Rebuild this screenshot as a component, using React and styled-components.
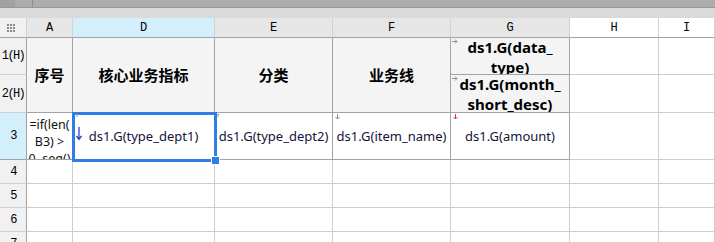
import React from "react";
import styled, { createGlobalStyle } from "styled-components";

const Global = createGlobalStyle`
  html, body {
    margin: 0;
    padding: 0;
    background: #fff;
    overflow: hidden;
  }
  body {
    font-family: "Noto Sans", "Noto Sans CJK SC", sans-serif;
  }
`;

const Page = styled.div`
  width: 715px;
  height: 242px;
  overflow: hidden;
  display: flex;
  flex-direction: column;
  > * {
    flex-shrink: 0;
  }
`;

const TopBar = styled.div`
  display: flex;
  height: 7px;
  border-bottom: 1px solid #969696;
  background: #acacac;
`;

const BarSeg = styled.div`
  width: ${(p) => p.$w}px;
  background: ${(p) => p.$bg};
  border-right: ${(p) => (p.$line ? "1px solid #8c8c8c" : "none")};
`;

const SubBar = styled.div`
  height: 10px;
  background: #dadada;
`;

const Sheet = styled.div`
  display: grid;
  grid-template-columns: 27px 46px 142px 118px 118px 119px 89px 1fr;
  grid-template-rows: 20px 37px 38px 47px 24px 24px 24px 24px;
`;

const ColHead = styled.div`
  background: ${(p) => p.$bg || "#e6e6e6"};
  border-right: 1px solid #d2d2d2;
  border-bottom: 1px solid #a3a3a3;
  display: flex;
  align-items: center;
  justify-content: center;
  font-family: "Liberation Mono", monospace;
  font-size: 12px;
  color: #000;
`;

const Corner = styled(ColHead)`
  background: #f1f1f3;
  justify-content: flex-start;
  padding-left: 7px;
`;

const Dots = styled.div`
  display: grid;
  grid-template-columns: repeat(3, 2px);
  gap: 1px;
  > span {
    width: 2px;
    height: 2px;
    background: #8a8a8a;
  }
`;

const RowHead = styled.div`
  grid-row: ${(p) => p.$row};
  grid-column: 1;
  background: ${(p) => p.$bg || "#f1f1f1"};
  border-right: 1px solid #a3a3a3;
  border-bottom: 1px solid ${(p) => p.$line || "#d0d0d0"};
  display: flex;
  align-items: center;
  justify-content: center;
  font-family: "Liberation Mono", monospace;
  font-size: 12px;
  letter-spacing: -1.6px;
  color: #000;
  white-space: nowrap;
`;

const Cell = styled.div`
  position: relative;
  grid-row: ${(p) => p.$row};
  grid-column: ${(p) => p.$col};
  background: ${(p) => p.$bg || "#fff"};
  border-right: 1px solid ${(p) => p.$line || "#cdcdcd"};
  border-bottom: 1px solid ${(p) => p.$line || "#cdcdcd"};
  display: flex;
  align-items: ${(p) => (p.$top ? "flex-start" : "center")};
  justify-content: center;
  text-align: center;
  overflow: hidden;
  color: #111;
  font-size: 13px;
`;

const Title = styled.div`
  font-family: "Noto Sans", "Noto Sans CJK SC", sans-serif;
  font-weight: 700;
  font-size: 15px;
  line-height: 20px;
  padding-top: ${(p) => p.$shift || 0}px;
  white-space: pre-line;
  color: #000;
`;

const Field = styled.div`
  font-family: "Noto Sans", "Noto Sans CJK SC", sans-serif;
  font-size: 13px;
  white-space: nowrap;
  color: #14143a;
`;

const Formula = styled.div`
  padding-top: 3px;
  font-family: "Noto Sans", sans-serif;
  font-size: 12.5px;
  line-height: 17px;
  white-space: pre-line;
  color: #111;
`;

const Selection = styled.div`
  position: absolute;
  left: -1px;
  top: -1px;
  right: -2px;
  bottom: -2px;
  border: 3px solid #2f7ee6;
  pointer-events: none;
  &::after {
    content: "";
    position: absolute;
    right: -6px;
    bottom: -6px;
    width: 7px;
    height: 7px;
    background: #2f7ee6;
    border: 1px solid #fff;
  }
`;

const Mark = styled.svg`
  position: absolute;
  left: ${(p) => p.$x || 1}px;
  top: ${(p) => p.$y || 1}px;
`;

const SelWrap = styled.div`
  position: relative;
  grid-row: 4;
  grid-column: 3;
  z-index: 2;
`;

const cols = [
  { label: "A" },
  { label: "D", bg: "#d3effb" },
  { label: "E" },
  { label: "F" },
  { label: "G" },
  { label: "H", bg: "#fff" },
  { label: "I", bg: "#fff" },
];

const Tick = ({ x, y }) => (
  <Mark $x={x} $y={y} width="4" height="4" viewBox="0 0 4 4">
    <path d="M1 0.5 L3 0.5 L1.5 3" fill="none" stroke="#9a9a9a" strokeWidth="1" />
  </Mark>
);

const RightArrow = ({ y }) => (
  <Mark $x={1} $y={y} width="6" height="5" viewBox="0 0 6 5">
    <path d="M0 2.5 H5 M3 0.5 L5 2.5 L3 4.5" fill="none" stroke="#8d8d8d" strokeWidth="1" />
  </Mark>
);

const DownArrow = ({ color }) => (
  <Mark $x={2} $y={1} width="5" height="6" viewBox="0 0 5 6">
    <path d="M2.5 0 V5 M0.5 3 L2.5 5 L4.5 3" fill="none" stroke={color} strokeWidth="1" />
  </Mark>
);

const App = () => {
  const block = "#a3a3a3";
  return (
    <Page>
      <Global />
      <TopBar>
        <BarSeg $w={15} $bg="#a1a1a1" />
        <BarSeg $w={17} $bg="#acacac" $line />
      </TopBar>
      <SubBar />
      <Sheet>
        <Corner>
          <Dots>
            {Array.from({ length: 9 }).map((_, i) => (
              <span key={i} />
            ))}
          </Dots>
        </Corner>
        {cols.map((c) => (
          <ColHead key={c.label} $bg={c.bg}>
            {c.label}
          </ColHead>
        ))}

        <RowHead $row={2}>1(H)</RowHead>
        <RowHead $row={3}>2(H)</RowHead>
        <RowHead $row={4} $bg="#d3effb" $line="#a3a3a3">3</RowHead>
        <RowHead $row={5}>4</RowHead>
        <RowHead $row={6}>5</RowHead>
        <RowHead $row={7}>6</RowHead>
        <RowHead $row={8}>7</RowHead>

        <Cell $row="2 / 4" $col={2} $bg="#f4f4f4" $line={block}>
          <Title>序号</Title>
        </Cell>
        <Cell $row="2 / 4" $col={3} $bg="#f4f4f4" $line={block}>
          <Title>核心业务指标</Title>
        </Cell>
        <Cell $row="2 / 4" $col={4} $bg="#f4f4f4" $line={block}>
          <Title>分类</Title>
        </Cell>
        <Cell $row="2 / 4" $col={5} $bg="#f4f4f4" $line={block}>
          <Title>业务线</Title>
        </Cell>
        <Cell $row={2} $col={6} $bg="#f4f4f4" $line={block}>
          <RightArrow y={1} />
          <Title $shift={1}>{"ds1.G(data_\ntype)"}</Title>
        </Cell>
        <Cell $row={3} $col={6} $bg="#f4f4f4" $line={block}>
          <RightArrow y={1} />
          <Title $shift={1}>{"ds1.G(month_\nshort_desc)"}</Title>
        </Cell>
        <Cell $row={2} $col={7} />
        <Cell $row={3} $col={7} />
        <Cell $row={2} $col={8} />
        <Cell $row={3} $col={8} />

        <Cell $row={4} $col={2} $line={block} $top>
          <Formula>{"=if(len(\nB3) >\n0, seq()"}</Formula>
        </Cell>
        <Cell $row={4} $col={3} $line={block}>
          <Field>ds1.G(type_dept1)</Field>
        </Cell>
        <SelWrap>
          <Selection />
          <Tick x={2} y={1} />
          <Mark $x={3} $y={14} width="6" height="14" viewBox="0 0 6 14">
            <path d="M3 0 V12 M0.5 9 L3 12.5 L5.5 9" fill="none" stroke="#2546c8" strokeWidth="1.3" />
          </Mark>
        </SelWrap>
        <Cell $row={4} $col={4} $line={block}>
          <Tick x={1} y={1} />
          <Field>ds1.G(type_dept2)</Field>
        </Cell>
        <Cell $row={4} $col={5} $line={block}>
          <DownArrow color="#8d8d8d" />
          <Field>ds1.G(item_name)</Field>
        </Cell>
        <Cell $row={4} $col={6} $line={block}>
          <DownArrow color="#e0304a" />
          <Field>ds1.G(amount)</Field>
        </Cell>
        <Cell $row={4} $col={7} />
        <Cell $row={4} $col={8} />

        {[5, 6, 7, 8].map((r) =>
          [2, 3, 4, 5, 6, 7, 8].map((c) => <Cell key={`${r}-${c}`} $row={r} $col={c} />)
        )}
      </Sheet>
    </Page>
  );
};

export default App;
